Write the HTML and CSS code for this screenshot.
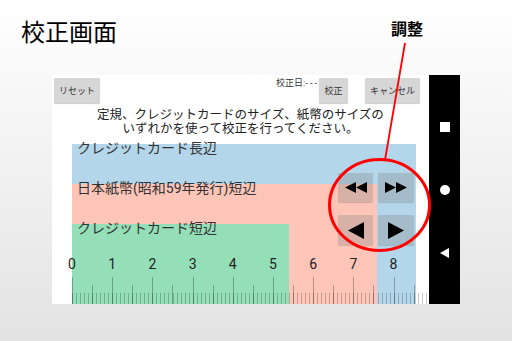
FILE: index.html
```html
<!DOCTYPE html>
<html lang="ja">
<head>
  <meta charset="UTF-8" />
  <meta name="viewport" content="width=device-width, initial-scale=1.0"/>
  <title>校正画面</title>
  <link rel="stylesheet" href="styles.css">
</head>
<body>
  <h1 class="page-title">校正画面</h1>
  <div class="callout-label">調整</div>

  <div class="device">
    <div class="screen">
      <div class="toolbar">
        <button class="tb-btn btn-reset">リセット</button>
        <span class="calib-date">校正日:- - -</span>
        <button class="tb-btn btn-calib">校正</button>
        <button class="tb-btn btn-cancel">キャンセル</button>
      </div>

      <p class="note">定規、クレジットカードのサイズ、紙幣のサイズの<br>いずれかを使って校正を行ってください。</p>

      <div class="measure">
        <div class="band band-card-long">
          <div class="band-label">クレジットカード長辺</div>
          <div class="band band-bill">
            <div class="band-label">日本紙幣(昭和59年発行)短辺</div>
            <div class="band band-card-short">
              <div class="band-label">クレジットカード短辺</div>
            </div>
          </div>
        </div>

        <div class="ruler">
          <div class="ruler-nums">
            <span>0</span><span>1</span><span>2</span><span>3</span><span>4</span>
            <span>5</span><span>6</span><span>7</span><span>8</span>
          </div>
          <div class="ruler-ticks"></div>
        </div>

        <div class="adjust-pad">
          <button class="adj-btn">
            <svg width="22" height="11" viewBox="0 0 22 11"><polygon points="11,0 0,5.5 11,11"/><polygon points="22,0 11,5.5 22,11"/></svg>
          </button>
          <button class="adj-btn">
            <svg width="22" height="11" viewBox="0 0 22 11"><polygon points="0,0 11,5.5 0,11"/><polygon points="11,0 22,5.5 11,11"/></svg>
          </button>
          <button class="adj-btn">
            <svg width="16" height="17" viewBox="0 0 16 17"><polygon points="16,0 0,8.5 16,17"/></svg>
          </button>
          <button class="adj-btn">
            <svg width="16" height="17" viewBox="0 0 16 17"><polygon points="0,0 16,8.5 0,17"/></svg>
          </button>
        </div>
      </div>
    </div>

    <div class="navbar">
      <span class="nav-square"></span>
      <span class="nav-circle"></span>
      <span class="nav-back"></span>
    </div>
  </div>

  <svg class="annotation" width="512" height="341" viewBox="0 0 512 341">
    <line x1="405" y1="43" x2="385" y2="160" stroke="#f00" stroke-width="1.8"/>
    <ellipse cx="379.5" cy="205" rx="50" ry="45.5" fill="none" stroke="#f00" stroke-width="3"/>
  </svg>
</body>
</html>
```

FILE: styles.css
```css
body {
  margin: 0;
  width: 512px;
  height: 341px;
  overflow: hidden;
  position: relative;
  font-family: Roboto, "Noto Sans CJK JP", sans-serif;
  background: linear-gradient(to bottom, #ffffff, #e3e3e3);
  color: #000;
}

.page-title {
  margin: 0;
  padding: 18px 0 0 21px;
  font-size: 24px;
  line-height: 30px;
  font-weight: normal;
}

.callout-label {
  position: absolute;
  top: 21px;
  left: 391px;
  font-size: 16px;
  line-height: 18px;
  font-weight: bold;
}

.device {
  display: flex;
  margin: 27px 0 0 52px;
  height: 229px;
}

/* phone screen */
.screen {
  width: 377px;
  background: #fff;
  display: flex;
  flex-direction: column;
}

.toolbar {
  display: flex;
  align-items: flex-start;
  padding: 3px 0 0 2px;
  height: 25px;
}

.tb-btn {
  height: 25px;
  padding: 0;
  border: none;
  border-radius: 1px;
  background: #d6d6d6;
  box-shadow: 0 1px 1px rgba(0,0,0,0.2);
  font-family: inherit;
  font-size: 9px;
  color: #333;
}

.btn-reset { width: 46px; }
.btn-calib { width: 29px; }
.btn-cancel { width: 55px; margin-left: 17px; }

.calib-date {
  width: 43px;
  margin-left: 176px;
  font-size: 9px;
  line-height: 10px;
  color: #333;
  white-space: nowrap;
}

.note {
  margin: 5px 0 0;
  text-align: center;
  font-size: 12.5px;
  line-height: 14px;
  color: #222;
}

.measure {
  position: relative;
  flex: 1;
  margin: 8px 0 0 20px;
}

.band {
  display: flex;
  flex-direction: column;
  flex: 1;
}

.band-card-long {
  width: 344px;
  height: 100%;
  background: #b4d6ea;
}

.band-bill {
  width: 305px;
  background: #fdc5b8;
}

.band-card-short {
  width: 217px;
  background: #94dfb7;
}

.band-label {
  height: 40px;
  flex: none;
  padding-left: 5px;
  font-size: 14px;
  line-height: 8px;
  color: #333;
  white-space: nowrap;
}

/* ruler */
.ruler {
  position: absolute;
  left: 0;
  bottom: 0;
  width: 356px;
}

.ruler-nums {
  display: flex;
  margin-left: -20.1px;
  height: 20px;
  font-size: 14px;
  line-height: 14px;
  color: #222;
}

.ruler-nums span {
  width: 40.2px;
  flex: none;
  text-align: center;
}

.ruler-ticks {
  height: 27px;
  background:
    repeating-linear-gradient(to right, rgba(0,0,0,0.27) 0 1px, transparent 1px 40.2px) left bottom / 100% 27px no-repeat,
    repeating-linear-gradient(to right, transparent 0 20.1px, rgba(0,0,0,0.27) 20.1px 21.1px, transparent 21.1px 40.2px) left bottom / 100% 19px no-repeat,
    repeating-linear-gradient(to right, rgba(0,0,0,0.22) 0 1px, transparent 1px 4.02px) left bottom / 100% 11px no-repeat;
}

/* adjust buttons over the bands */
.adjust-pad {
  position: absolute;
  left: 266px;
  top: 29px;
  display: grid;
  grid-template-columns: 35px 36px;
  grid-template-rows: 29px 30px;
  column-gap: 5px;
  row-gap: 13px;
}

.adj-btn {
  display: flex;
  align-items: center;
  justify-content: center;
  padding: 0;
  border: none;
  border-radius: 1px;
  background: rgba(128,128,128,0.3);
  box-shadow: 0 1px 1px rgba(0,0,0,0.15);
}

.adj-btn svg { fill: #000; }

/* android nav bar */
.navbar {
  width: 31px;
  background: #000;
  display: flex;
  flex-direction: column;
  align-items: center;
  padding-top: 47px;
  gap: 53px;
}

.nav-square {
  width: 10px;
  height: 10px;
  background: #fff;
}

.nav-circle {
  width: 10px;
  height: 10px;
  border-radius: 50%;
  background: #fff;
}

.nav-back {
  width: 0;
  height: 0;
  border-right: 9px solid #fff;
  border-top: 5px solid transparent;
  border-bottom: 5px solid transparent;
}

.annotation {
  position: absolute;
  left: 0;
  top: 0;
  pointer-events: none;
}
```
